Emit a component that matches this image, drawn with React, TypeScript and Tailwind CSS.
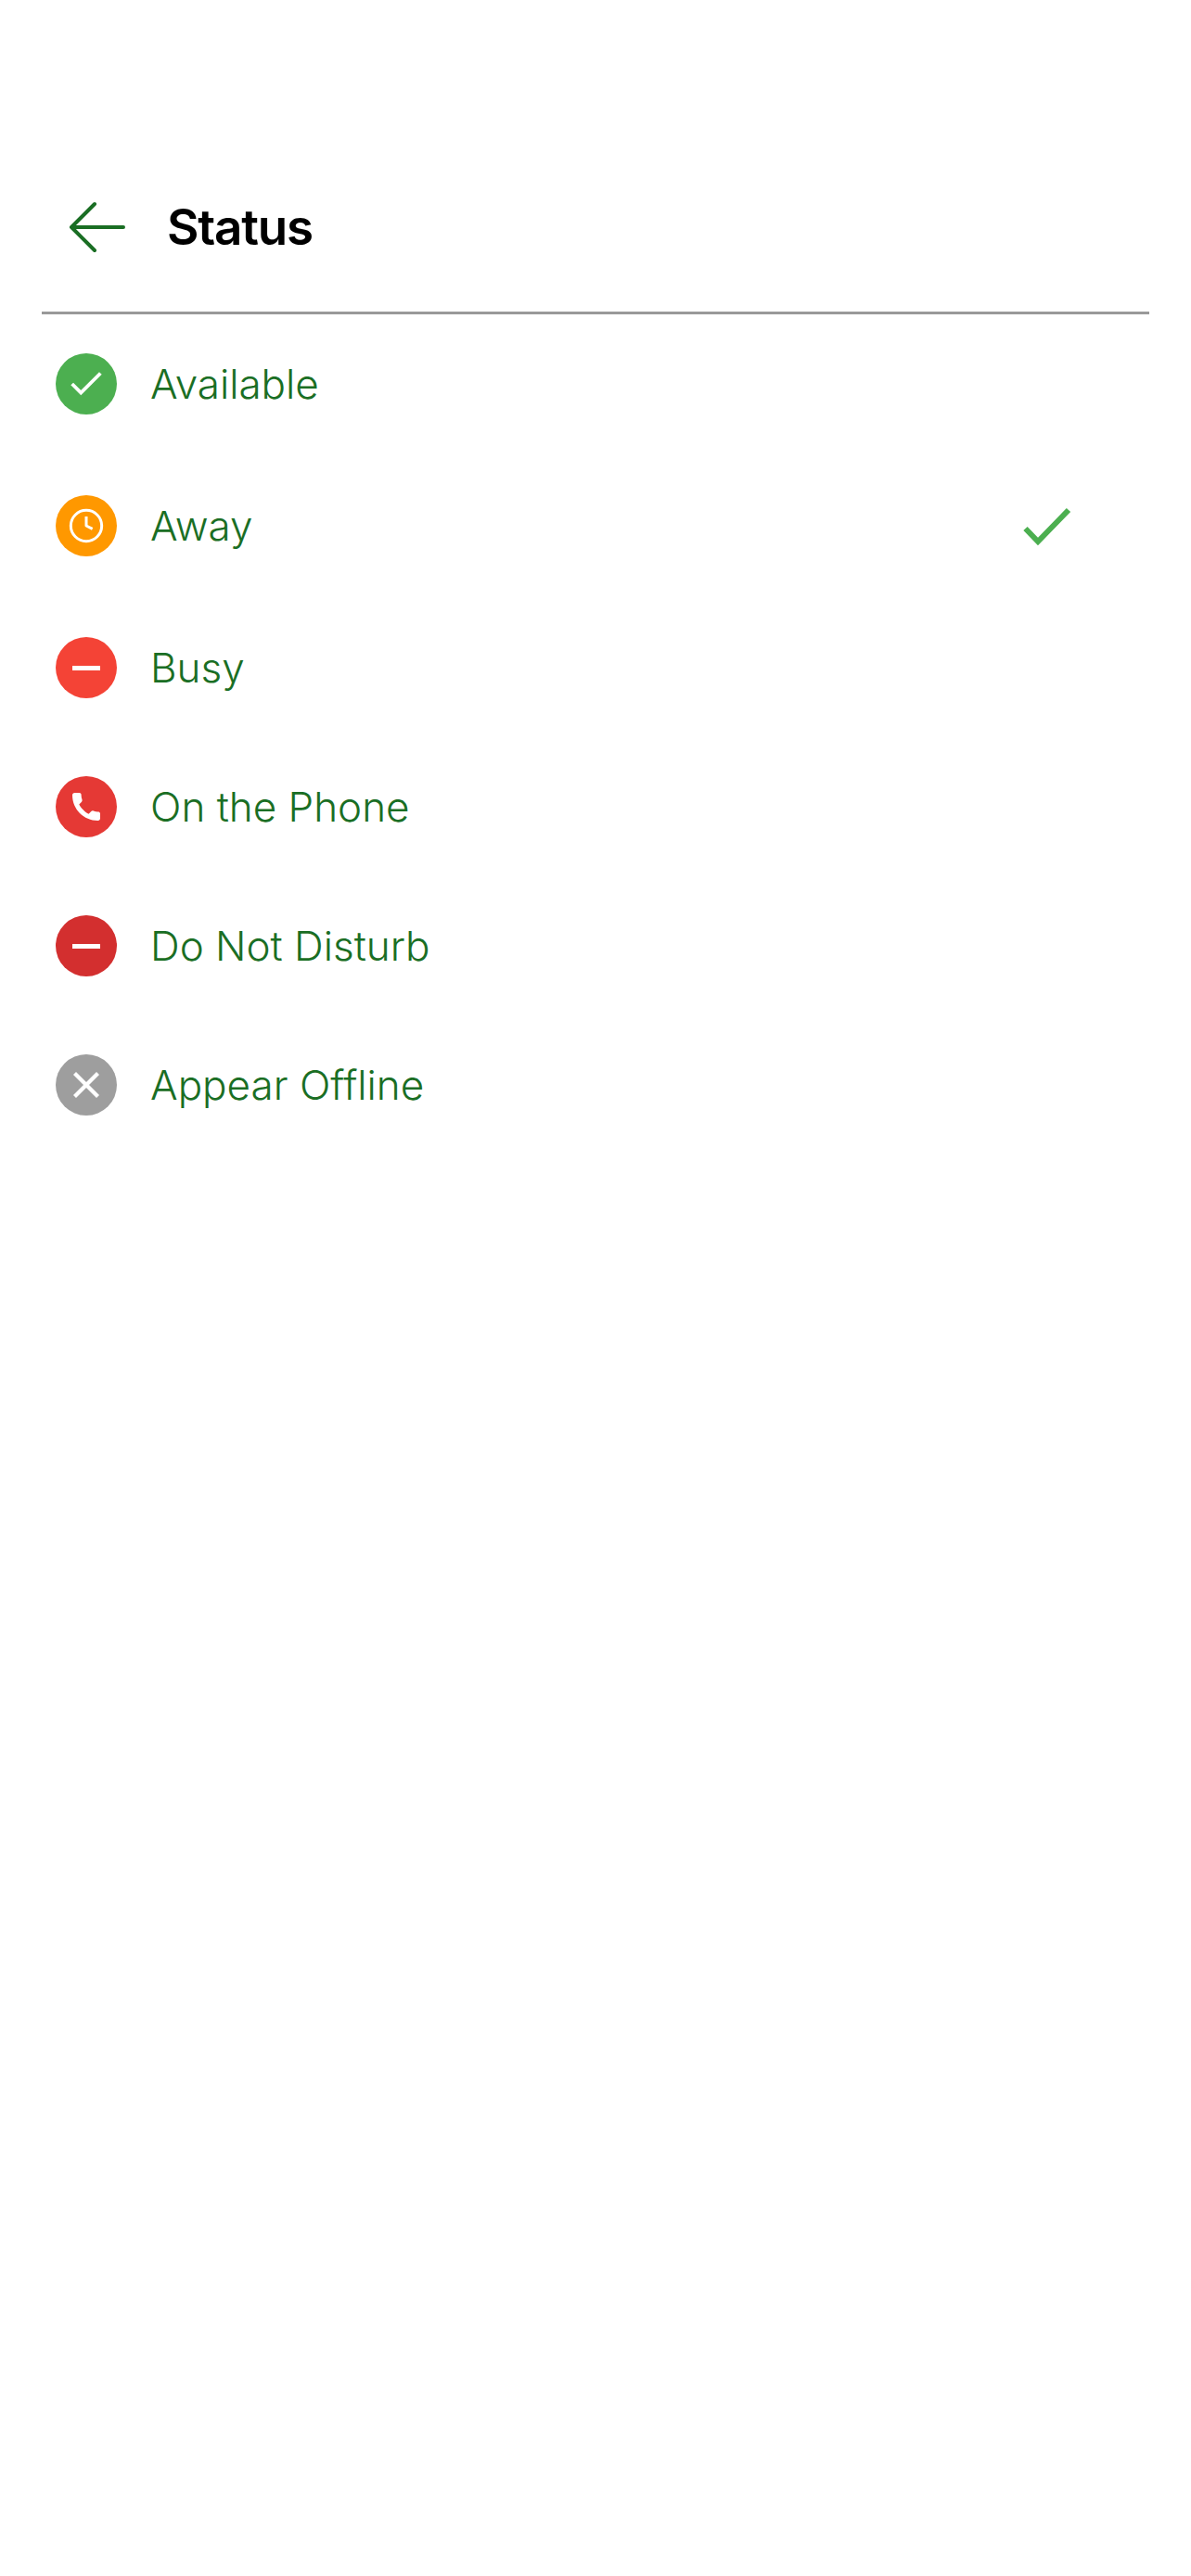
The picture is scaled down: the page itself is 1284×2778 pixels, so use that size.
import { Check, Clock, X } from "lucide-react";
import type { ReactNode } from "react";

const GREEN = "#1a6e24";

const PhoneIcon = () => (
  <svg width="30" height="30" viewBox="0 0 30 30" fill="white">
    <path d="M0 2.5 C0 1 1 0 2.5 0 H7.5 C9 0 9.6 1 9.6 2.2 C9.6 4 9.9 5.7 10.5 7.3 C10.8 8.2 10.6 9 10 9.7 L7.3 12.4 C9.2 16.3 13.7 20.7 17.6 22.7 L20.3 20 C21 19.4 21.8 19.2 22.7 19.5 C24.3 20.1 26 20.4 27.8 20.4 C29 20.4 30 21 30 22.5 V27.5 C30 29 29 30 27.5 30 C12.3 30 0 17.700 0 2.500 Z" />
  </svg>
);

const items: { label: string; bg: string; icon: ReactNode; h: string; selected?: boolean }[] = [
  { label: "Available", bg: "bg-[#4caf50]", h: "h-[150px]", icon: <Check size={46} color="white" strokeWidth={2} strokeLinecap="butt" strokeLinejoin="miter" /> },
  { label: "Away", bg: "bg-[#ff9800]", h: "h-[155px]", selected: true, icon: <Clock size={40} color="white" strokeWidth={1.8} strokeLinecap="butt" /> },
  { label: "Busy", bg: "bg-[#f44336]", h: "h-[152px]", icon: <div className="h-[5px] w-[30px] bg-white" /> },
  { label: "On the Phone", bg: "bg-[#e53935]", h: "h-[148px]", icon: <PhoneIcon /> },
  { label: "Do Not Disturb", bg: "bg-[#d32f2f]", h: "h-[152px]", icon: <div className="h-[5px] w-[30px] bg-white" /> },
  { label: "Appear Offline", bg: "bg-[#9e9e9e]", h: "h-[148px]", icon: <X size={50} color="white" strokeWidth={2} strokeLinecap="butt" /> },
];

export default function App() {
  return (
    <div className="min-h-[2778px] w-full bg-white font-['Inter',sans-serif]">
      <header className="mx-[45px] flex h-[339px] items-center border-b-[3px] border-[#999999] pt-[154px]">
        <svg width="62" height="56" viewBox="0 0 62 56" className="ml-[29px]" fill="none" stroke={GREEN} strokeWidth="4" strokeLinecap="round" strokeLinejoin="round">
          <path d="M59 28 H3 M28 3 L3 28 L28 53" />
        </svg>
        <h1 className="ml-[44px] text-[53px] leading-none font-semibold tracking-[-1.2px] text-black">Status</h1>
      </header>
      <ul className="pl-[60px] pr-[127px]">
        {items.map((item) => (
          <li key={item.label} className={`flex items-center ${item.h}`}>
            <div className={`flex h-[66px] w-[66px] shrink-0 items-center justify-center rounded-full ${item.bg}`}>
              {item.icon}
            </div>
            <span className="ml-[36px] flex-1 text-[44px] font-[350] text-[#1a6e24]">{item.label}</span>
            {item.selected && (
              <svg width="56" height="44" viewBox="0 0 56 44" fill="none" stroke="#4caf50" strokeWidth="6">
                <path d="M4.500 25 L18 39 L51 5" />
              </svg>
            )}
          </li>
        ))}
      </ul>
    </div>
  );
}
